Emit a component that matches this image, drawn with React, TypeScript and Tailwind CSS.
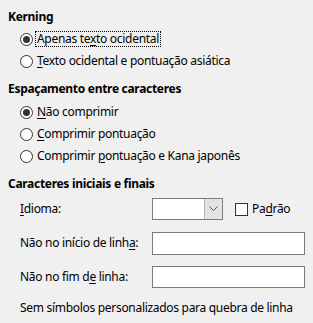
import type { ReactNode } from "react";

function Radio({ checked, focused, children }: { checked?: boolean; focused?: boolean; children: ReactNode }) {
  return (
    <div className="flex h-[22px] items-center">
      <span className="flex h-[13px] w-[13px] items-center justify-center rounded-full border border-[#333333] bg-white">
        {checked && <span className="h-[7px] w-[7px] rounded-full bg-[#333333]" />}
      </span>
      <span
        className={
          focused
            ? "ml-[2px] border border-dotted border-black px-[1px] leading-[14px]"
            : "ml-[3px] px-[1px] leading-[14px]"
        }
      >
        {children}
      </span>
    </div>
  );
}

function U({ children }: { children: ReactNode }) {
  return <span className="underline underline-offset-2">{children}</span>;
}

function Heading({ children, className }: { children: ReactNode; className: string }) {
  return <div className={"h-4 font-bold leading-4 " + className}>{children}</div>;
}

export default function App() {
  return (
    <div
      className="h-[323px] w-[313px] bg-[#f0f0f0] pl-2 pt-[9px] text-[12px] tracking-[-0.3px] text-black"
      style={{ fontFamily: '"Noto Sans", "Open Sans", sans-serif' }}
    >
      <Heading className="">Kerning</Heading>
      <div className="ml-3 mt-[3px]">
        <Radio checked focused>
          Apenas te<U>x</U>to ocidental
        </Radio>
        <Radio>
          <U>T</U>exto ocidental e pontuação asiática
        </Radio>
      </div>

      <Heading className="mt-[9px]">Espaçamento entre caracteres</Heading>
      <div className="ml-3 mt-[4px]">
        <Radio checked>
          <U>N</U>ão comprimir
        </Radio>
        <Radio>
          <U>C</U>omprimir pontuação
        </Radio>
        <Radio>
          Comprimir <U>p</U>ontuação e Kana japonês
        </Radio>
      </div>

      <Heading className="mt-[9px]">Caracteres iniciais e finais</Heading>
      <div className="ml-3 mt-[6px] flex flex-col gap-3">
        <div className="flex h-[22px] items-center">
          <div className="w-[132px]">
            <U>I</U>dioma:
          </div>
          <div className="flex h-[22px] w-[71px] border border-[#7a7a7a] bg-white">
            <div className="flex-1" />
            <div className="flex w-[18px] items-center justify-center border-l border-[#b5b5b5] bg-[#e3e3e3]">
              <svg width="9" height="6" viewBox="0 0 9 6" fill="none">
                <path d="M0.5 0.5 L4.5 4.5 L8.5 0.5" stroke="#555" strokeWidth="1" />
              </svg>
            </div>
          </div>
          <span className="ml-3 h-[13px] w-[13px] border border-[#333333] bg-white" />
          <span className="ml-1">
            Pa<U>d</U>rão
          </span>
        </div>
        <div className="flex h-[22px] items-center">
          <div className="w-[132px]">
            Não no início de linh<U>a</U>:
          </div>
          <div className="h-[23px] w-[153px] border border-[#7a7a7a] bg-white" />
        </div>
        <div className="flex h-[22px] items-center">
          <div className="w-[132px]">
            Não no fim d<U>e</U> linha:
          </div>
          <div className="h-[22px] w-[153px] border border-[#7a7a7a] bg-white" />
        </div>
        <div className="h-4 leading-4">Sem símbolos personalizados para quebra de linha</div>
      </div>
    </div>
  );
}
